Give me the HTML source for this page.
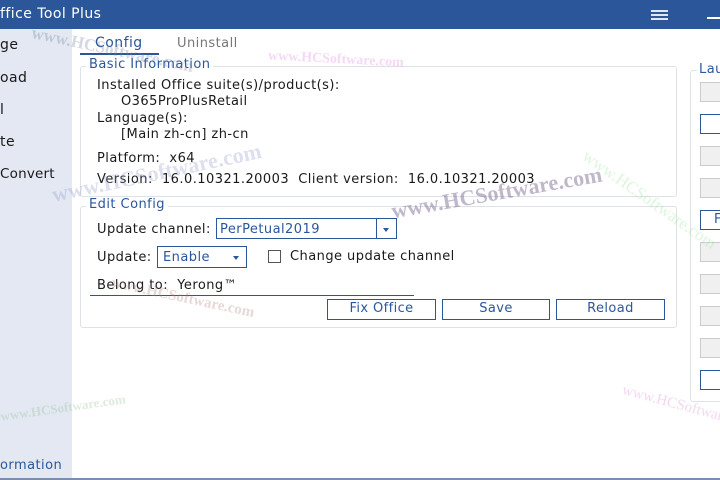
<!DOCTYPE html><html><head><style>
body{margin:0;width:720px;height:480px;overflow:hidden;background:#fff;font-family:"DejaVu Sans","Liberation Sans",sans-serif;position:relative}
.a{position:absolute}
.t{font-size:13px;color:#1a1a1a;white-space:nowrap;letter-spacing:.45px}
.b{color:#2b579a}
.btn{position:absolute;border:1px solid #2b579a;background:#fff;color:#2b579a;font-size:13px;letter-spacing:.4px;text-align:center;line-height:18px;box-sizing:border-box;height:21px}
.g{position:absolute;left:700px;width:30px;height:20px;background:#f0f0f0;border:1px solid #ccc;box-sizing:border-box}
.w{position:absolute;left:700px;width:30px;height:20px;background:#fff;border:1px solid #2b579a;box-sizing:border-box}
.wm{position:absolute;font-family:"Liberation Serif",serif;font-weight:bold;white-space:nowrap;opacity:.3;letter-spacing:0}
</style></head><body>
<div class="a" style="left:0;top:0;width:720px;height:29px;background:#2b579a"></div>
<div class="a t" style="left:0;top:6px;color:#fff;font-size:14px">ffice Tool Plus</div>
<div class="a" style="left:651px;top:10px;width:17px;height:1.5px;background:#fff;box-shadow:0 4px 0 #fff,0 8px 0 #fff;opacity:.85"></div>
<div class="a" style="left:707px;top:17px;width:13px;height:1.5px;background:#fff"></div>
<div class="a" style="left:0;top:29px;width:72px;height:451px;background:#e3e8f2"></div>
<div class="a t" style="left:0;top:37px;font-size:14px">ge</div>
<div class="a t" style="left:0;top:70px;font-size:14px">oad</div>
<div class="a t" style="left:0;top:102px;font-size:14px">l</div>
<div class="a t" style="left:0;top:134px;font-size:14px">te</div>
<div class="a t" style="left:0;top:166px;font-size:13.5px;letter-spacing:.2px">Convert</div>
<div class="a t" style="left:0;top:458px;font-size:13px;color:#2b579a">ormation</div>
<div class="a t b" style="left:95px;top:35px;font-size:14px">Config</div>
<div class="a" style="left:80px;top:53px;width:79px;height:2px;background:#2b579a"></div>
<div class="a t" style="left:177px;top:36px;color:#777">Uninstall</div>
<div class="a" style="left:80px;top:66px;width:595px;height:129px;border:1px solid #dde2e8;border-radius:3px"></div>
<div class="a t b" style="left:86px;top:57px;background:#fff;padding:0 3px">Basic Information</div>
<div class="a t" style="left:97px;top:78px">Installed Office suite(s)/product(s):</div>
<div class="a t" style="left:121px;top:94px">O365ProPlusRetail</div>
<div class="a t" style="left:97px;top:111px">Language(s):</div>
<div class="a t" style="left:121px;top:127px">[Main zh-cn] zh-cn</div>
<div class="a t" style="left:97px;top:151px">Platform:&nbsp;&nbsp;x64</div>
<div class="a t" style="left:97px;top:172px">Version:&nbsp;&nbsp;16.0.10321.20003&nbsp;&nbsp;Client version:&nbsp;&nbsp;16.0.10321.20003</div>
<div class="a" style="left:80px;top:206px;width:595px;height:120px;border:1px solid #dde2e8;border-radius:3px"></div>
<div class="a t b" style="left:86px;top:197px;background:#fff;padding:0 3px">Edit Config</div>
<div class="a t" style="left:97px;top:222px">Update channel:</div>
<div class="a" style="left:216px;top:218px;width:181px;height:21px;border:1px solid #2b579a;box-sizing:border-box"></div>
<div class="a t b" style="left:220px;top:222px">PerPetual2019</div>
<div class="a" style="left:376px;top:219px;width:1px;height:19px;background:#2b579a"></div>
<div class="a" style="left:383px;top:228px;border:3px solid transparent;border-top:4px solid #2b579a"></div>
<div class="a t" style="left:97px;top:250px">Update:</div>
<div class="a" style="left:157px;top:246px;width:90px;height:22px;border:1px solid #2b579a;box-sizing:border-box"></div>
<div class="a t b" style="left:163px;top:250px">Enable</div>
<div class="a" style="left:233px;top:256px;border:3px solid transparent;border-top:4px solid #2b579a"></div>
<div class="a" style="left:268px;top:250px;width:13px;height:13px;border:1px solid #555;box-sizing:border-box"></div>
<div class="a t" style="left:290px;top:249px">Change update channel</div>
<div class="a t" style="left:97px;top:278px">Belong to:&nbsp;&nbsp;Yerong™</div>
<div class="a" style="left:90px;top:295px;width:324px;height:1px;background:#2b579a"></div>
<div class="btn" style="left:327px;top:299px;width:109px">Fix Office</div>
<div class="btn" style="left:442px;top:299px;width:108px">Save</div>
<div class="btn" style="left:556px;top:299px;width:109px">Reload</div>
<div class="a" style="left:690px;top:70px;width:40px;height:330px;border:1px solid #dde2e8;border-radius:3px"></div>
<div class="a t b" style="left:697px;top:62px;background:#fff;padding:0 2px">Lau</div>
<div class="g" style="top:82px"></div><div class="w" style="top:114px"></div><div class="g" style="top:146px"></div><div class="g" style="top:178px"></div>
<div class="w" style="top:210px"></div><div class="a t b" style="left:714px;top:212px">F</div>
<div class="g" style="top:242px"></div><div class="g" style="top:274px"></div><div class="g" style="top:306px"></div><div class="g" style="top:338px"></div><div class="w" style="top:370px"></div>
<div class="a" style="left:0;top:478px;width:720px;height:2px;background:#7a8fb0"></div>
<div class="wm" style="left:30px;top:40px;font-size:17px;color:#7080a0;transform:rotate(12deg)">www.HCSoftware.com</div>
<div class="wm" style="left:268px;top:52px;font-size:14px;color:#e080e0;transform:rotate(3deg)">www.HCSoftware.com</div>
<div class="wm" style="left:50px;top:160px;font-size:22px;color:#9098c8;transform:rotate(-12deg)">www.HCSoftware.com</div>
<div class="wm" style="left:390px;top:180px;font-size:22px;color:#605080;transform:rotate(-10deg);opacity:.4">www.HCSoftware.com</div>
<div class="wm" style="left:570px;top:190px;font-size:17px;color:#90e090;transform:rotate(35deg);font-weight:normal">www.HCSoftware.com</div>
<div class="wm" style="left:110px;top:290px;font-size:15px;color:#b08080;transform:rotate(12deg)">www.HCSoftware.com</div>
<div class="wm" style="left:0;top:400px;font-size:13px;color:#90c090;transform:rotate(-8deg)">www.HCSoftware.com</div>
<div class="wm" style="left:620px;top:400px;font-size:15px;color:#d080d0;transform:rotate(15deg);font-weight:normal">www.HCSoftware.com</div>
</body></html>
